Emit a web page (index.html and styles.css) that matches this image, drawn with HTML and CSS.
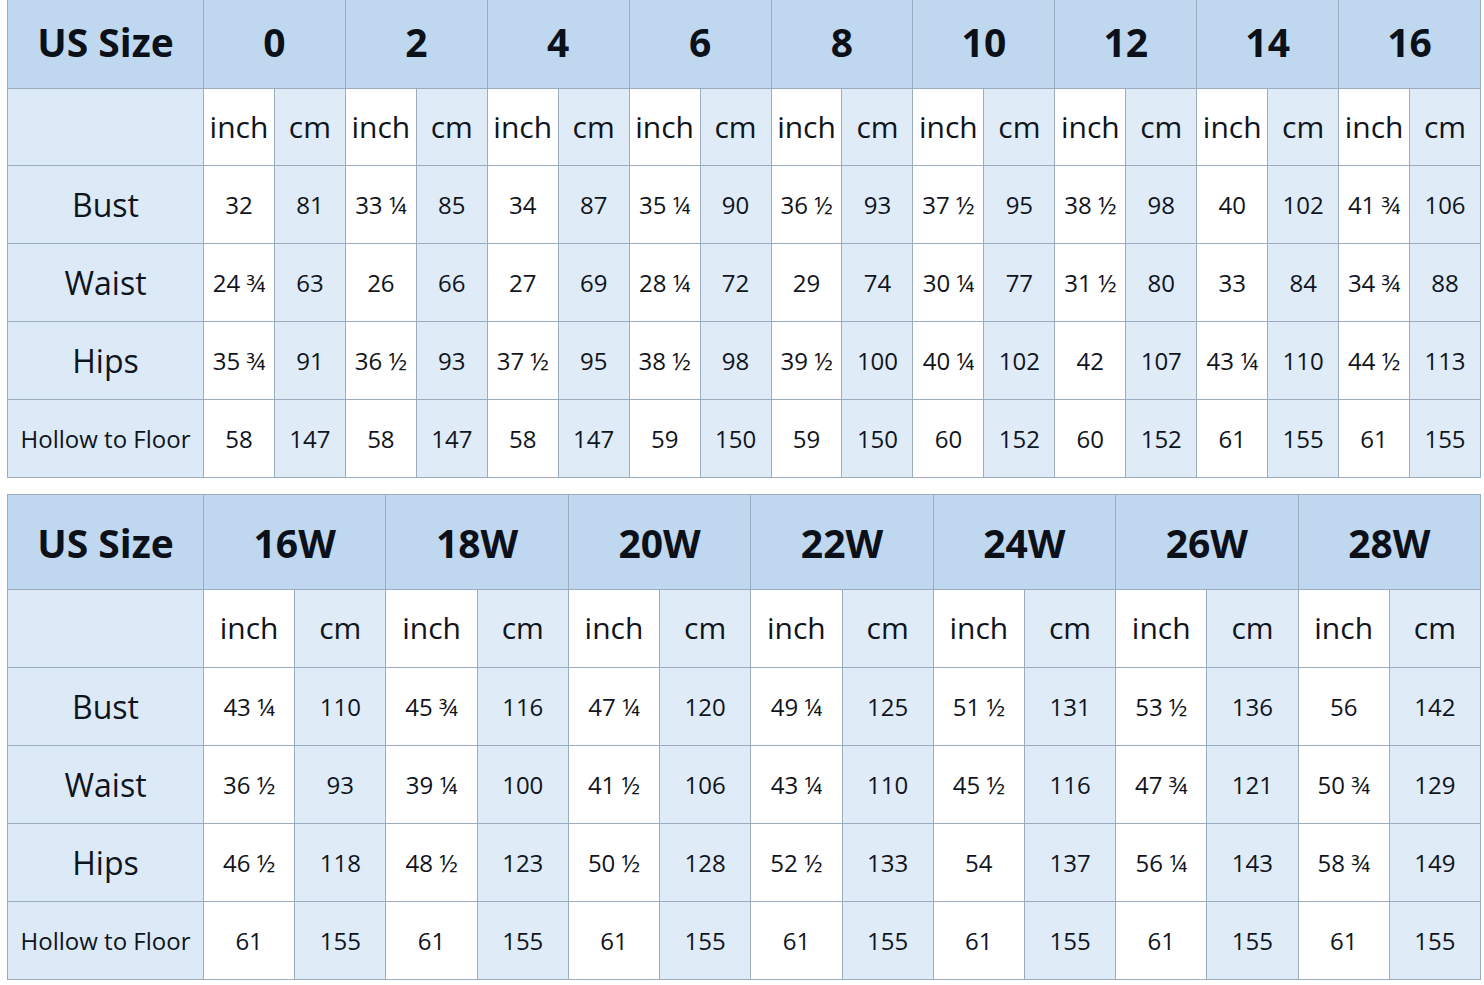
FILE: index.html
```html
<!DOCTYPE html>
<html>
<head>
<meta charset="utf-8">
<title>Size Chart</title>
<link rel="stylesheet" href="styles.css">
</head>
<body>
<div class="chart chart-a">
  <div class="c hd">US Size</div>
  <div class="c hd span2">0</div><div class="c hd span2">2</div><div class="c hd span2">4</div><div class="c hd span2">6</div><div class="c hd span2">8</div><div class="c hd span2">10</div><div class="c hd span2">12</div><div class="c hd span2">14</div><div class="c hd span2">16</div>

  <div class="c lab"></div>
  <div class="c w unit">inch</div><div class="c b unit">cm</div><div class="c w unit">inch</div><div class="c b unit">cm</div><div class="c w unit">inch</div><div class="c b unit">cm</div><div class="c w unit">inch</div><div class="c b unit">cm</div><div class="c w unit">inch</div><div class="c b unit">cm</div><div class="c w unit">inch</div><div class="c b unit">cm</div><div class="c w unit">inch</div><div class="c b unit">cm</div><div class="c w unit">inch</div><div class="c b unit">cm</div><div class="c w unit">inch</div><div class="c b unit">cm</div>

  <div class="c lab">Bust</div>
  <div class="c w">32</div><div class="c b">81</div><div class="c w">33 ¼</div><div class="c b">85</div><div class="c w">34</div><div class="c b">87</div><div class="c w">35 ¼</div><div class="c b">90</div><div class="c w">36 ½</div><div class="c b">93</div><div class="c w">37 ½</div><div class="c b">95</div><div class="c w">38 ½</div><div class="c b">98</div><div class="c w">40</div><div class="c b">102</div><div class="c w">41 ¾</div><div class="c b">106</div>

  <div class="c lab">Waist</div>
  <div class="c w">24 ¾</div><div class="c b">63</div><div class="c w">26</div><div class="c b">66</div><div class="c w">27</div><div class="c b">69</div><div class="c w">28 ¼</div><div class="c b">72</div><div class="c w">29</div><div class="c b">74</div><div class="c w">30 ¼</div><div class="c b">77</div><div class="c w">31 ½</div><div class="c b">80</div><div class="c w">33</div><div class="c b">84</div><div class="c w">34 ¾</div><div class="c b">88</div>

  <div class="c lab">Hips</div>
  <div class="c w">35 ¾</div><div class="c b">91</div><div class="c w">36 ½</div><div class="c b">93</div><div class="c w">37 ½</div><div class="c b">95</div><div class="c w">38 ½</div><div class="c b">98</div><div class="c w">39 ½</div><div class="c b">100</div><div class="c w">40 ¼</div><div class="c b">102</div><div class="c w">42</div><div class="c b">107</div><div class="c w">43 ¼</div><div class="c b">110</div><div class="c w">44 ½</div><div class="c b">113</div>

  <div class="c lab small">Hollow to Floor</div>
  <div class="c w">58</div><div class="c b">147</div><div class="c w">58</div><div class="c b">147</div><div class="c w">58</div><div class="c b">147</div><div class="c w">59</div><div class="c b">150</div><div class="c w">59</div><div class="c b">150</div><div class="c w">60</div><div class="c b">152</div><div class="c w">60</div><div class="c b">152</div><div class="c w">61</div><div class="c b">155</div><div class="c w">61</div><div class="c b">155</div>
</div>

<div class="chart chart-b">
  <div class="c hd">US Size</div>
  <div class="c hd span2">16W</div><div class="c hd span2">18W</div><div class="c hd span2">20W</div><div class="c hd span2">22W</div><div class="c hd span2">24W</div><div class="c hd span2">26W</div><div class="c hd span2">28W</div>

  <div class="c lab"></div>
  <div class="c w unit">inch</div><div class="c b unit">cm</div><div class="c w unit">inch</div><div class="c b unit">cm</div><div class="c w unit">inch</div><div class="c b unit">cm</div><div class="c w unit">inch</div><div class="c b unit">cm</div><div class="c w unit">inch</div><div class="c b unit">cm</div><div class="c w unit">inch</div><div class="c b unit">cm</div><div class="c w unit">inch</div><div class="c b unit">cm</div>

  <div class="c lab">Bust</div>
  <div class="c w">43 ¼</div><div class="c b">110</div><div class="c w">45 ¾</div><div class="c b">116</div><div class="c w">47 ¼</div><div class="c b">120</div><div class="c w">49 ¼</div><div class="c b">125</div><div class="c w">51 ½</div><div class="c b">131</div><div class="c w">53 ½</div><div class="c b">136</div><div class="c w">56</div><div class="c b">142</div>

  <div class="c lab">Waist</div>
  <div class="c w">36 ½</div><div class="c b">93</div><div class="c w">39 ¼</div><div class="c b">100</div><div class="c w">41 ½</div><div class="c b">106</div><div class="c w">43 ¼</div><div class="c b">110</div><div class="c w">45 ½</div><div class="c b">116</div><div class="c w">47 ¾</div><div class="c b">121</div><div class="c w">50 ¾</div><div class="c b">129</div>

  <div class="c lab">Hips</div>
  <div class="c w">46 ½</div><div class="c b">118</div><div class="c w">48 ½</div><div class="c b">123</div><div class="c w">50 ½</div><div class="c b">128</div><div class="c w">52 ½</div><div class="c b">133</div><div class="c w">54</div><div class="c b">137</div><div class="c w">56 ¼</div><div class="c b">143</div><div class="c w">58 ¾</div><div class="c b">149</div>

  <div class="c lab small">Hollow to Floor</div>
  <div class="c w">61</div><div class="c b">155</div><div class="c w">61</div><div class="c b">155</div><div class="c w">61</div><div class="c b">155</div><div class="c w">61</div><div class="c b">155</div><div class="c w">61</div><div class="c b">155</div><div class="c w">61</div><div class="c b">155</div><div class="c w">61</div><div class="c b">155</div>
</div>
</body>
</html>
```

FILE: styles.css
```css
html, body {
  margin: 0;
  padding: 0;
  background: #ffffff;
}

body {
  padding-left: 7px;
  font-family: "Open Sans", "Noto Sans", "DejaVu Sans", sans-serif;
  color: #10141c;
}

.chart {
  display: grid;
  width: 1474px;
  box-sizing: border-box;
  gap: 1px;
  padding: 1px;
  background: #9aacbe;
}

.chart-a {
  padding-top: 0;
  grid-template-columns: 195px repeat(18, 1fr);
  grid-template-rows: 88px 76px 77px 77px 77px 77px;
}

.chart-b {
  margin-top: 16px;
  grid-template-columns: 195px repeat(14, 1fr);
  grid-template-rows: 94px 77px 77px 77px 77px 77px;
}

.c {
  display: flex;
  align-items: center;
  justify-content: center;
  font-size: 24px;
  white-space: nowrap;
  overflow: hidden;
}

.hd {
  background: #bfd8ef;
  font-weight: 700;
  font-size: 39px;
  color: #0c1018;
}

.chart-a .hd {
  padding-bottom: 6px;
}

.span2 {
  grid-column: span 2;
}

.lab {
  background: #dce9f6;
  font-size: 32px;
}

.lab.small {
  font-size: 24px;
}

.w {
  background: #ffffff;
}

.b {
  background: #dfebf7;
}

.unit {
  font-size: 30px;
  padding-bottom: 2px;
}
```
